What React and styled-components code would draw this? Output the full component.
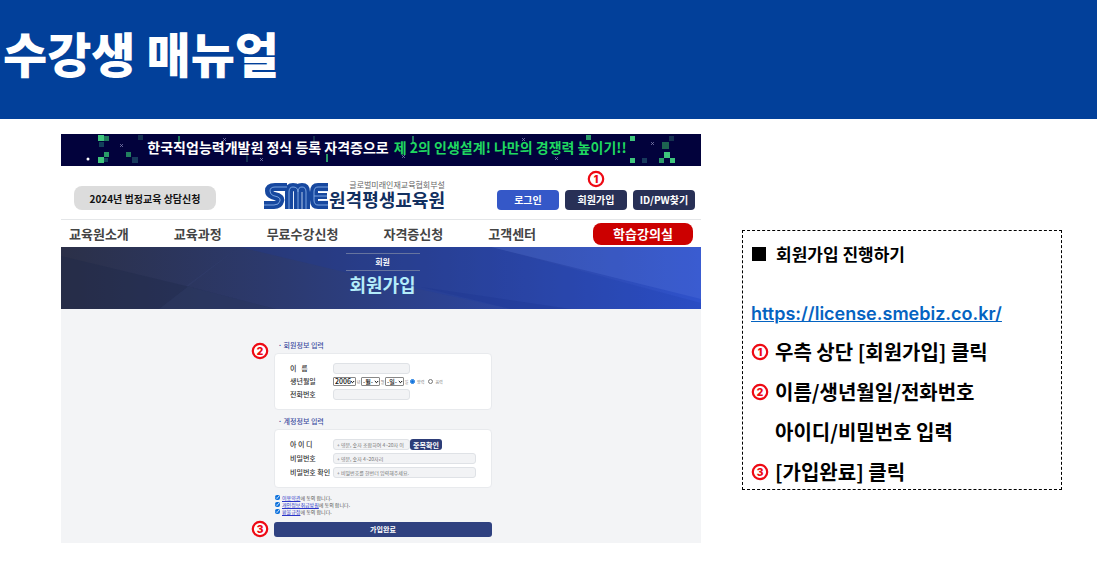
import React from "react";
import styled, { createGlobalStyle } from "styled-components";

const navItems = ["교육원소개", "교육과정", "무료수강신청", "자격증신청", "고객센터"];

const agreements = [
    { id: "terms", link: "이용약관", rest: "에 동의 합니다." },
    { id: "privacy", link: "개인정보취급방침", rest: "에 동의 합니다." },
    { id: "refund", link: "환불규정", rest: "에 동의 합니다." },
];

// [x, y, size, color]
const pixels = [
    [37, 1, 6, "#3fc47c"], [43, 2, 5, "#1f7a5c"], [38, 8, 5, "#12405a"],
    [43, 18, 5, "#2a9a68"], [37, 23, 6, "#3fc47c"], [43, 24, 4, "#12405a"],
    [65, 18, 5, "#22805f"], [71, 23, 6, "#173a5c"], [77, 1, 5, "#14304f"],
    [525, 1, 5, "#2a9a68"], [569, 2, 5, "#3fc47c"], [601, 8, 7, "#1d6350"],
    [608, 2, 5, "#14304f"], [569, 24, 5, "#3fc47c"], [581, 24, 5, "#173a5c"],
    [598, 24, 5, "#2a9a68"], [603, 18, 6, "#3fc47c"], [609, 24, 5, "#3fc47c"],
];

// [x, y, height, color]
const sticks = [
    [117, 2, 8, "#1f7a5c"], [185, 20, 8, "#14304f"], [265, 20, 8, "#2a9a68"],
    [252, 2, 6, "#14304f"], [351, 2, 7, "#1f7a5c"],
];

const sparks = [[59, 10], [162, 4], [199, 24], [341, 21], [461, 4], [494, 23], [590, 8]];

const NumberMark = ({ n }) => (
    <svg width="18" height="18" viewBox="0 0 18 18" aria-hidden="true">
        <circle cx="9" cy="9" r="7.2" fill="#fff" stroke="#ee0a14" strokeWidth="2.2" />
        <text x="9" y="12.6" textAnchor="middle" fontFamily="Inter, sans-serif" fontSize="10" fontWeight="900" fill="#ee0a14">{n}</text>
    </svg>
);

const SmeLogo = () => (
    <svg width="65" height="28" viewBox="0 0 65 28" fill="none" role="img" aria-label="SME">
        <g stroke="#17489f" strokeWidth="8">
            <path d="M23 5H11Q5 5 5 9Q5 12 9 13.500L14 15Q17 16.500 16 19Q15 23 10 23H0" />
            <path d="M25 27V10Q25 5 29 5Q34 5 34 10V27M34 27V10Q34 5 38 5Q42 5 42 10V27" />
            <path d="M64 5H54Q50 5 50 10V18Q50 23 54 23H64" />
            <path d="M50 14H63" strokeWidth="6" />
        </g>
        <g stroke="#86aee6" strokeWidth="0.9">
            <path d="M23 5H11Q6 5 6 9Q6 12 9 13.500L14 15Q17 16.500 16 19Q15 23 10 23H0" />
            <path d="M25 27V10Q25 5 29 5Q34 5 34 10V27M34 10Q34 5 38 5Q42 5 42 10V27" />
            <path d="M64 5H54Q50 5 50 10V18Q50 23 54 23H64M50 14H63" />
        </g>
        <path d="M29.500 10V27M38 10V27M55 9.500H64M55 18.500H64" stroke="#dce8fa" strokeWidth="0.8" />
    </svg>
);

const SitePreview = () => (
    <Site>
        <Promo>
            <PromoArt viewBox="0 0 640 32" preserveAspectRatio="xMidYMid slice" aria-hidden="true">
                {pixels.map(([x, y, s, c]) => <rect key={`${x}-${y}`} x={x} y={y} width={s} height={s} fill={c} />)}
                {sticks.map(([x, y, h, c]) => <rect key={`${x}-${y}`} x={x} y={y} width="2" height={h} fill={c} />)}
                {sparks.map(([x, y]) => (
                    <path key={x} d={`M${x} ${y}l3 3m0 -3l-3 3`} stroke="#8a8ab8" strokeWidth="0.7" />
                ))}
                <circle cx="27" cy="25" r="1.500" fill="#fff" />
            </PromoArt>
            <PromoText>한국직업능력개발원 정식 등록 자격증으로</PromoText>
            <PromoText $accent>제 2의 인생설계! 나만의 경쟁력 높이기!!</PromoText>
        </Promo>
        <SiteHeader>
            <ConsultButton type="button">2024년 법정교육 상담신청</ConsultButton>
            <Brand>
                <SmeLogo />
                <BrandText>
                    <small>글로벌미래인재교육협회부설</small>
                    <strong>원격평생교육원</strong>
                </BrandText>
            </Brand>
            <AccountButtons>
                <AccountButton type="button" $primary>로그인</AccountButton>
                <Marked>
                    <AccountButton type="button">회원가입</AccountButton>
                    <TopMark><NumberMark n="1" /></TopMark>
                </Marked>
                <AccountButton type="button">ID/PW찾기</AccountButton>
            </AccountButtons>
        </SiteHeader>
        <Nav>
            {navItems.map((item) => <NavLink href="#" key={item}>{item}</NavLink>)}
            <ClassroomButton type="button">학습강의실</ClassroomButton>
        </Nav>
        <Hero>
            <HeroArt viewBox="0 0 640 62" preserveAspectRatio="none" aria-hidden="true">
                <path d="M0 9L125 39L215 62H0Z" fill="#1d2747" opacity="0.35" />
                <path d="M178 0L98 62H215L125 39Z" fill="#4a5c96" opacity="0.12" />
                <path d="M178 0H430L640 56V62H450L330 36Z" fill="#1c3aa8" opacity="0.22" />
                <path d="M430 0H640V52Z" fill="#5b7be0" opacity="0.25" />
                <path d="M360 40L450 62H510Z" fill="#16308c" opacity="0.25" />
            </HeroArt>
            <HeroCategory>회원</HeroCategory>
            <HeroTitle>회원가입</HeroTitle>
        </Hero>
        <FormArea>
            <JoinForm onSubmit={(e) => e.preventDefault()}>
                <Marked>
                    <SideMark $top={3}><NumberMark n="2" /></SideMark>
                    <SectionTitle>· 회원정보 입력</SectionTitle>
                </Marked>
                <Card $gap={2}>
                    <Row>
                        <Label htmlFor="name">이 &nbsp; 름</Label>
                        <TextInput id="name" $short />
                    </Row>
                    <Row>
                        <Label htmlFor="year">생년월일</Label>
                        <BirthFields>
                            <Select id="year" $wide defaultValue="2006"><option>2006</option></Select>
                            <Tiny>년</Tiny>
                            <Select aria-label="월"><option>-월-</option></Select>
                            <Tiny>월</Tiny>
                            <Select aria-label="일"><option>-일-</option></Select>
                            <Tiny>일</Tiny>
                            <RadioLabel><Radio name="calendar" defaultChecked />양력</RadioLabel>
                            <RadioLabel><Radio name="calendar" />음력</RadioLabel>
                        </BirthFields>
                    </Row>
                    <Row>
                        <Label htmlFor="phone">전화번호</Label>
                        <TextInput id="phone" $short />
                    </Row>
                </Card>
                <SectionTitle>· 계정정보 입력</SectionTitle>
                <Card $gap={3}>
                    <Row>
                        <Label htmlFor="userid">아 이 디</Label>
                        <TextInput id="userid" $short placeholder="+ 영문, 숫자 조합하여 4~20자 이" />
                        <CheckButton type="button">중복확인</CheckButton>
                    </Row>
                    <Row>
                        <Label htmlFor="pw">비밀번호</Label>
                        <TextInput id="pw" type="password" placeholder="+ 영문, 숫자 4~20자리" />
                    </Row>
                    <Row>
                        <Label htmlFor="pw2">비밀번호 확인</Label>
                        <TextInput id="pw2" type="password" placeholder="+ 비밀번호를 한번더 입력해주세요." />
                    </Row>
                </Card>
                <Agreements>
                    {agreements.map(({ id, link, rest }) => (
                        <Agreement key={id}>
                            <Checkbox id={id} defaultChecked />
                            <label htmlFor={id}><a href="#">{link}</a>{rest}</label>
                        </Agreement>
                    ))}
                </Agreements>
                <Marked>
                    <SideMark $top={-2}><NumberMark n="3" /></SideMark>
                    <SubmitButton type="submit">가입완료</SubmitButton>
                </Marked>
            </JoinForm>
        </FormArea>
    </Site>
);

export default function App() {
    return (
        <>
            <GlobalStyle />
            <Banner><h1>수강생 매뉴얼</h1></Banner>
            <Content>
                <SitePreview />
                <Guide>
                    <GuideTitle><Square />회원가입 진행하기</GuideTitle>
                    <GuideLink href="https://license.smebiz.co.kr/">https://license.smebiz.co.kr/</GuideLink>
                    <Step><NumberMark n="1" />우측 상단 [회원가입] 클릭</Step>
                    <Step><NumberMark n="2" />이름/생년월일/전화번호</Step>
                    <Step $indent>아이디/비밀번호 입력</Step>
                    <Step><NumberMark n="3" />[가입완료] 클릭</Step>
                </Guide>
            </Content>
        </>
    );
}

const GlobalStyle = createGlobalStyle`
*{
    box-sizing: border-box;
}
body{
    margin: 0;
    background: #fff;
    color: #000;
    font-family: "Noto Sans CJK KR", "Noto Sans", sans-serif;
}
button, input, select{
    font-family: inherit;
    margin: 0;
}
button{
    border: 0;
    padding: 0;
    cursor: pointer;
}
`;

const Banner = styled.header`
background: #02409a;
padding: 16px 3px 31px;
h1{
    margin: 0;
    font-size: 48px;
    font-weight: 900;
    line-height: 72px;
    color: #fff;
}
`;

const Content = styled.main`
display: grid;
grid-template-columns: 2fr 1fr;
gap: 41px;
align-items: start;
padding: 15px 35px 23px 61px;
`;

const Site = styled.section`
background: #fff;
`;

const Promo = styled.div`
position: relative;
display: flex;
justify-content: center;
align-items: center;
gap: 5px;
height: 32px;
padding: 0 0 6px 12px;
background: #02023c;
overflow: hidden;
`;

const PromoArt = styled.svg`
position: absolute;
inset: 0;
width: 100%;
height: 100%;
`;

const PromoText = styled.span`
position: relative;
font-size: 14px;
font-weight: 700;
line-height: 20px;
white-space: nowrap;
color: ${({ $accent }) => ($accent ? "#1fd760" : "#fff")};
`;

const SiteHeader = styled.div`
display: flex;
justify-content: space-between;
align-items: flex-end;
height: 54px;
padding: 0 6px 9px 13px;
border-bottom: 1px solid #e4e6e8;
`;

const ConsultButton = styled.button`
width: 142px;
height: 24px;
border-radius: 8px;
background: #dcdcdc;
font-size: 10px;
font-weight: 700;
color: #111;
`;

const Brand = styled.div`
display: flex;
align-items: flex-end;
padding-right: 4px;
`;

const BrandText = styled.div`
display: flex;
flex-direction: column;
align-items: flex-end;
white-space: nowrap;
small{
    font-size: 8px;
    line-height: 8px;
    color: #666;
}
strong{
    font-size: 18px;
    line-height: 21px;
    font-weight: 700;
    color: #12305f;
}
`;

const AccountButtons = styled.div`
display: flex;
gap: 6px;
`;

const AccountButton = styled.button`
display: block;
width: 62px;
height: 20px;
border-radius: 4px;
background: ${({ $primary }) => ($primary ? "#3558c8" : "#283056")};
font-size: 10px;
font-weight: 700;
line-height: 18px;
color: #fff;
`;

const Marked = styled.div`
position: relative;
`;

const TopMark = styled.span`
position: absolute;
left: 22px;
bottom: 22px;
height: 18px;
display: flex;
`;

const SideMark = styled.span`
position: absolute;
left: -23px;
top: ${({ $top }) => $top}px;
height: 18px;
display: flex;
`;

const Nav = styled.nav`
display: flex;
align-items: center;
gap: 45px;
height: 27px;
padding: 0 8px;
`;

const NavLink = styled.a`
font-size: 13px;
font-weight: 700;
line-height: 20px;
white-space: nowrap;
color: #444;
text-decoration: none;
`;

const ClassroomButton = styled.button`
width: 100px;
height: 22px;
margin-left: auto;
border-radius: 8px;
background: #cc0000;
font-size: 13px;
font-weight: 700;
line-height: 20px;
color: #fff;
`;

const Hero = styled.div`
position: relative;
display: flex;
flex-direction: column;
align-items: center;
height: 62px;
padding: 6px 0 0 3px;
background: linear-gradient(90deg, #2b3048 0%, #2c3a70 35%, #2c4292 60%, #2f52cc 100%);
`;

const HeroArt = styled.svg`
position: absolute;
inset: 0;
width: 100%;
height: 100%;
`;

const HeroCategory = styled.span`
position: relative;
width: 74px;
border: solid #66749f;
border-width: 1px 0;
font-size: 8px;
font-weight: 700;
line-height: 16px;
text-align: center;
color: #fff;
`;

const HeroTitle = styled.h2`
position: relative;
margin: 0;
font-size: 18px;
font-weight: 700;
line-height: 26px;
color: #b4ecfa;
`;

const FormArea = styled.div`
display: flex;
justify-content: center;
padding: 30px 0 6px 4px;
background: #f3f4f6;
`;

const JoinForm = styled.form`
width: 218px;
`;

const SectionTitle = styled.h3`
margin: 0;
padding-left: 4px;
font-size: 7px;
font-weight: 500;
line-height: 13px;
padding-bottom: 1px;
color: #3b4ba0;
`;

const Card = styled.div`
display: flex;
flex-direction: column;
gap: ${({ $gap }) => $gap}px;
margin-bottom: 5px;
padding: 9px 15px;
border: 1px solid #e8eaed;
border-radius: 4px;
background: #fff;
`;

const Row = styled.div`
display: flex;
align-items: center;
height: 11px;
`;

const Label = styled.label`
flex: 0 0 43px;
font-size: 7px;
font-weight: 500;
line-height: 11px;
white-space: nowrap;
color: #333;
`;

const TextInput = styled.input`
width: ${({ $short }) => ($short ? "77px" : "143px")};
height: 11px;
padding: 0 3px;
border: 1px solid #dfe2e6;
border-radius: 3px;
background: #f2f3f5;
font-size: 5px;
&::placeholder{
    color: #777;
    opacity: 1;
}
`;

const BirthFields = styled.div`
display: flex;
align-items: center;
`;

const Select = styled.select`
appearance: none;
width: ${({ $wide }) => ($wide ? "23px" : "19px")};
height: 9px;
padding: 0 0 0 1px;
border: 1px solid #888;
border-radius: 1px;
background: #fff url('data:image/svg+xml,<svg xmlns="http://www.w3.org/2000/svg" viewBox="0 0 5 4"><path d="M.8 1l1.700 1.700L4.200 1" fill="none" stroke="black"/></svg>') no-repeat right center / 5px 4px;
font-size: ${({ $wide }) => ($wide ? "7px" : "6px")};
font-weight: 500;
line-height: 7px;
color: #111;
`;

const Tiny = styled.span`
width: 5px;
font-size: 4px;
line-height: 8px;
text-align: center;
color: #777;
`;

const RadioLabel = styled.label`
display: flex;
align-items: center;
gap: 2px;
margin: 0 3px 0 1px;
font-size: 4px;
line-height: 8px;
white-space: nowrap;
color: #777;
`;

const Radio = styled.input.attrs({ type: "radio" })`
width: 5px;
height: 5px;
accent-color: #0a6fdc;
`;

const CheckButton = styled.button`
width: 32px;
height: 11px;
border-radius: 3px;
background: #2d3d78;
font-size: 7px;
font-weight: 700;
line-height: 10px;
color: #fff;
`;

const Agreements = styled.div`
display: flex;
flex-direction: column;
padding: 1px 0 7px;
`;

const Agreement = styled.div`
display: flex;
align-items: center;
gap: 2px;
padding-left: 1px;
font-size: 5px;
line-height: 7px;
color: #555;
a{
    color: #2b35c8;
}
`;

const Checkbox = styled.input.attrs({ type: "checkbox" })`
width: 5px;
height: 5px;
accent-color: #0a6fdc;
`;

const SubmitButton = styled.button`
display: block;
width: 100%;
height: 15px;
border-radius: 3px;
background: #2f4180;
font-size: 7px;
font-weight: 700;
line-height: 15px;
color: #fff;
`;

const Guide = styled.aside`
display: flex;
flex-direction: column;
align-items: flex-start;
gap: 6px;
margin-top: 96px;
padding: 0 8px;
border: 1px dashed #000;
`;

const GuideTitle = styled.h2`
display: flex;
align-items: center;
gap: 10px;
margin: 0 0 16px;
padding-left: 1px;
font-size: 17px;
font-weight: 700;
line-height: 46px;
`;

const Square = styled.span`
width: 14px;
height: 14px;
background: #000;
`;

const GuideLink = styled.a`
font-family: Inter, sans-serif;
font-size: 18px;
font-weight: 600;
line-height: 30px;
color: #0563c1;
`;

const Step = styled.div`
display: flex;
align-items: center;
gap: 6px;
padding-left: ${({ $indent }) => ($indent ? "24px" : "0")};
font-size: 20px;
font-weight: 700;
line-height: 34px;
white-space: nowrap;
`;
